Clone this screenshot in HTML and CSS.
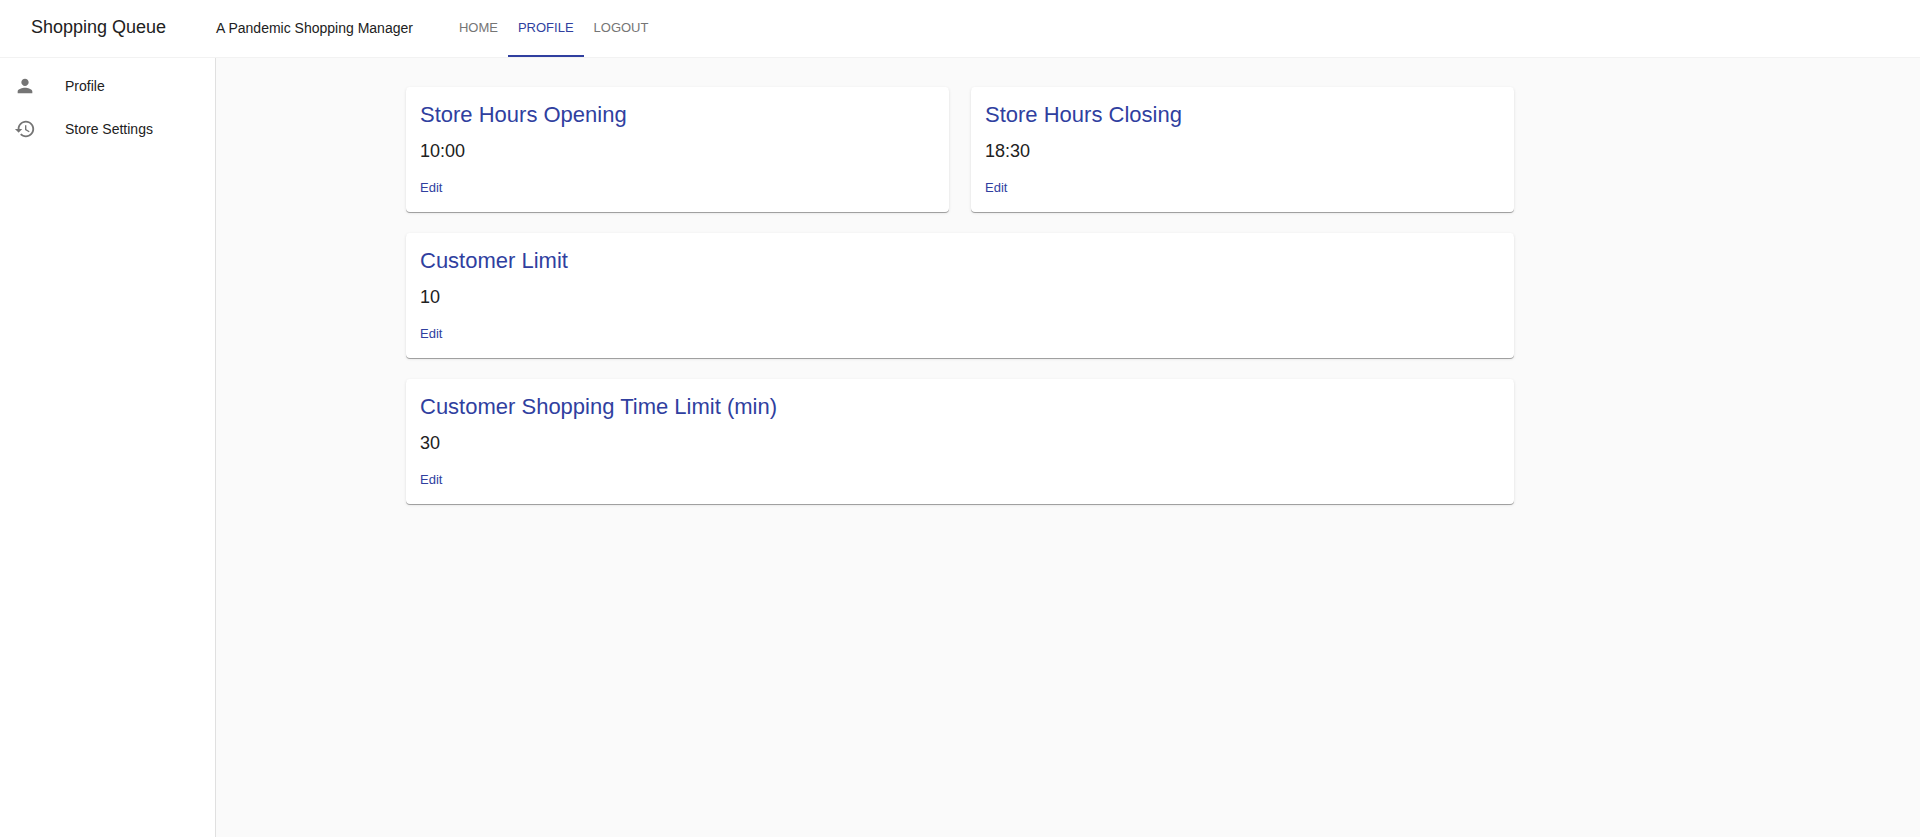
FILE: index.html
```html
<!DOCTYPE html>
<html lang="en">
<head>
<meta charset="utf-8">
<title>Shopping Queue</title>
<link rel="stylesheet" href="styles.css">
</head>
<body>
<header class="topbar">
  <h1 class="brand">Shopping Queue</h1>
  <p class="tagline">A Pandemic Shopping Manager</p>
  <nav class="tabs">
    <a class="tab" href="#home">HOME</a>
    <a class="tab tab-active" href="#profile" aria-current="page">PROFILE</a>
    <a class="tab" href="#logout">LOGOUT</a>
  </nav>
</header>
<div class="layout">
  <nav class="sidebar">
    <a class="side-link" href="#profile">
      <svg class="icon" viewBox="0 0 24 24" aria-hidden="true"><path d="M12 12c2.21 0 4-1.79 4-4s-1.79-4-4-4-4 1.79-4 4 1.79 4 4 4zm0 2c-2.67 0-8 1.34-8 4v2h16v-2c0-2.66-5.33-4-8-4z"/></svg>
      <span>Profile</span>
    </a>
    <a class="side-link" href="#settings">
      <svg class="icon" viewBox="0 0 24 24" aria-hidden="true"><path d="M13 3c-4.97 0-9 4.03-9 9H1l3.89 3.89.07.14L9 12H6c0-3.87 3.13-7 7-7s7 3.13 7 7-3.13 7-7 7c-1.93 0-3.68-.79-4.94-2.06l-1.42 1.42C8.27 19.99 10.51 21 13 21c4.97 0 9-4.03 9-9s-4.03-9-9-9zm-1 5v5l4.28 2.54.72-1.21-3.5-2.08V8H12z"/></svg>
      <span>Store Settings</span>
    </a>
  </nav>
  <main class="content">
    <div class="cards">
      <section class="card">
        <h2 class="card-title">Store Hours Opening</h2>
        <p class="card-value">10:00</p>
        <button class="edit" type="button">Edit</button>
      </section>
      <section class="card">
        <h2 class="card-title">Store Hours Closing</h2>
        <p class="card-value">18:30</p>
        <button class="edit" type="button">Edit</button>
      </section>
      <section class="card card-wide">
        <h2 class="card-title">Customer Limit</h2>
        <p class="card-value">10</p>
        <button class="edit" type="button">Edit</button>
      </section>
      <section class="card card-wide">
        <h2 class="card-title">Customer Shopping Time Limit (min)</h2>
        <p class="card-value">30</p>
        <button class="edit" type="button">Edit</button>
      </section>
    </div>
  </main>
</div>
</body>
</html>
```
FILE: styles.css
```css
* {
  box-sizing: border-box;
}

body {
  margin: 0;
  min-height: 100vh;
  display: flex;
  flex-direction: column;
  background: #fafafa;
  color: #212121;
  font-family: "Liberation Sans", Arial, sans-serif;
  font-size: 14px;
  line-height: 20px;
}

h1, h2, p {
  margin: 0;
  font-weight: 400;
}

a {
  color: inherit;
  text-decoration: none;
}

.topbar {
  display: grid;
  grid-template-columns: 185px auto 1fr;
  padding-left: 31px;
  background: #fff;
  border-bottom: 1px solid #f2f2f2;
}

.brand {
  padding-top: 16px;
  font-size: 18px;
  line-height: 22px;
}

.tagline {
  padding-top: 18px;
}

.tabs {
  display: flex;
  padding-left: 36px;
}

.tab {
  padding: 18px 10px 17px;
  border-bottom: 2px solid transparent;
  color: #757575;
  font-size: 13px;
}

.tab-active {
  color: #303f9f;
  border-bottom-color: #303f9f;
}

.layout {
  flex: 1;
  display: grid;
  grid-template-columns: 216px 1fr;
}

.sidebar {
  padding-top: 6px;
  background: #fff;
  border-right: 1px solid #e0e0e0;
}

.side-link {
  display: flex;
  align-items: center;
  gap: 29px;
  height: 43px;
  padding-left: 14px;
}

.icon {
  width: 22px;
  height: 22px;
  fill: #757575;
}

.content {
  padding: 29px 216px 29px 0;
}

.cards {
  display: grid;
  grid-template-columns: 1fr 1fr;
  gap: 21px 22px;
  max-width: 1152px;
  margin: 0 auto;
  padding: 0 22px;
}

.card {
  padding: 14px 14px 12px;
  background: #fff;
  border-radius: 4px;
  box-shadow: 0 1px 0 rgba(0, 0, 0, 0.3), 0 1px 3px rgba(0, 0, 0, 0.12);
}

.card-wide {
  grid-column: 1 / -1;
}

.card-title {
  color: #303f9f;
  font-size: 22px;
  line-height: 28px;
}

.card-value {
  padding-top: 8px;
  font-size: 18px;
  line-height: 28px;
}

.edit {
  display: block;
  margin-top: 10px;
  padding: 4px 0;
  border: 0;
  background: none;
  color: #303f9f;
  font: 13px/17px "Liberation Sans", Arial, sans-serif;
}
```
